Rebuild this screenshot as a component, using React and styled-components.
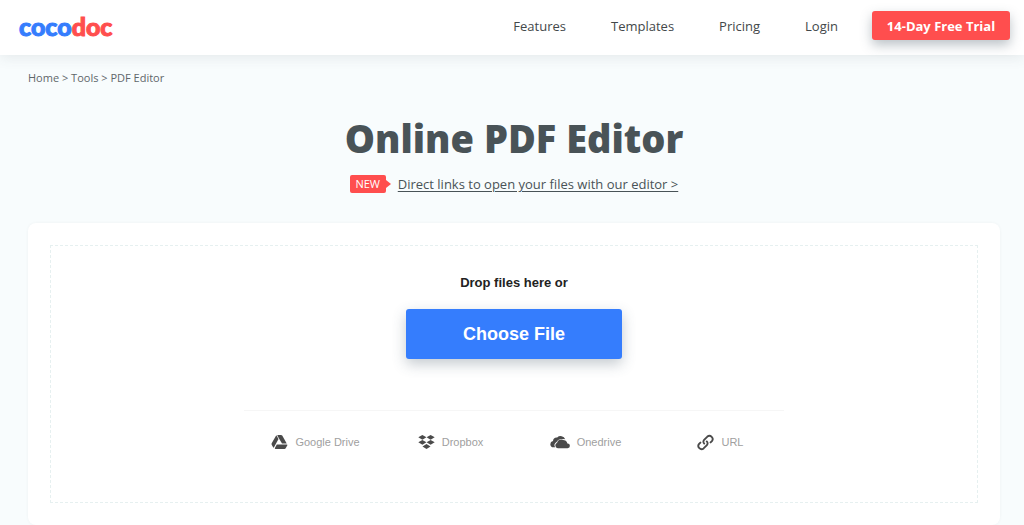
import React, { useRef } from 'react';
import styled, { createGlobalStyle } from 'styled-components';

const GlobalStyles = createGlobalStyle`
  * {
    box-sizing: border-box;
  }

  body {
    margin: 0;
    background: #f8fcfd;
    color: #495357;
    font-family: 'Open Sans', 'Noto Sans', sans-serif;
  }
`;

const Header = styled.header`
  position: relative;
  display: flex;
  align-items: center;
  justify-content: space-between;
  height: 55px;
  padding: 0 14px 4px 19px;
  background: #fff;
  box-shadow: 0 3px 12px rgba(73, 83, 87, 0.1);
`;

const Logo = styled.a`
  color: #357dfd;
  font-family: Lato, sans-serif;
  font-size: 25px;
  font-weight: 900;
  line-height: 32px;
  text-decoration: none;
  -webkit-text-stroke: 1px currentColor;

  span {
    color: #ff4e4e;
  }
`;

const Nav = styled.nav`
  display: flex;
  align-items: center;
  gap: 45px;
`;

const NavLink = styled.a`
  color: #43484a;
  font-size: 13px;
  line-height: 20px;
  text-decoration: none;
`;

const TrialButton = styled.button`
  width: 138px;
  height: 29px;
  margin-left: -11px;
  padding: 0;
  border: 0;
  border-radius: 3px;
  background: #ff4e4e;
  box-shadow: 0 5px 12px rgba(60, 80, 95, 0.35);
  color: #fff;
  font-family: inherit;
  font-size: 13px;
  font-weight: 700;
  cursor: pointer;
`;

const Page = styled.main`
  padding: 15px 24px 0 28px;
`;

const Breadcrumb = styled.nav`
  color: #5f676a;
  font-size: 11px;
  line-height: 16px;

  a {
    color: inherit;
    text-decoration: none;
  }
`;

const Title = styled.h1`
  margin: 24px 0 0;
  color: #495357;
  font-size: 38px;
  font-weight: 800;
  line-height: 56px;
  text-align: center;
`;

const Notice = styled.div`
  display: flex;
  align-items: center;
  justify-content: center;
  gap: 12px;
  margin-top: 8px;
`;

const NewTag = styled.span`
  position: relative;
  width: 36px;
  border-radius: 2px;
  background: #ff4e4e;
  color: #fff;
  font-size: 11px;
  line-height: 18px;
  text-align: center;

  &:after {
    content: '';
    position: absolute;
    top: 5px;
    left: 100%;
    border: 4px solid transparent;
    border-left: 5px solid #ff4e4e;
    border-right: 0;
  }
`;

const NoticeLink = styled.a`
  color: #495357;
  font-size: 13px;
  line-height: 20px;
  text-underline-offset: 2px;
`;

const UploadCard = styled.section`
  margin-top: 29px;
  padding: 22px;
  border-radius: 8px;
  background: #fff;
  box-shadow: 0 0 3px rgba(73, 83, 87, 0.06);
`;

const DropZone = styled.div`
  display: flex;
  flex-direction: column;
  align-items: center;
  min-height: 258px;
  padding: 27px 16px 0;
  border: 1px dashed #e6f0f0;
  font-family: 'Liberation Sans', Arial, sans-serif;
`;

const DropLabel = styled.label`
  color: #222;
  font-size: 13px;
  font-weight: 700;
  line-height: 20px;
`;

const ChooseButton = styled.button`
  width: 216px;
  height: 50px;
  margin-top: 16px;
  border: 0;
  border-radius: 3px;
  background: #357dfd;
  box-shadow: 0 5px 14px rgba(60, 80, 95, 0.3);
  color: #fff;
  font-family: inherit;
  font-size: 18px;
  font-weight: 700;
  cursor: pointer;
`;

const Sources = styled.div`
  display: grid;
  grid-template-columns: repeat(4, 1fr);
  width: 100%;
  max-width: 540px;
  margin-top: 51px;
  padding-top: 21px;
  border-top: 1px solid #f6f6f6;
`;

const SourceButton = styled.button`
  display: flex;
  align-items: center;
  justify-content: center;
  gap: 7px;
  height: 20px;
  padding: 0 0 0 8px;
  border: 0;
  background: none;
  color: #a0a0a0;
  font-family: inherit;
  font-size: 11px;
  white-space: nowrap;
  cursor: pointer;

  svg {
    flex: none;
    fill: #4a4a4a;
  }
`;

const DriveIcon = () => (
  <svg width="17" height="16" viewBox="0 0 17 16">
    <path d="M5.3 1.2 L7.5 5.1 L3 13.3 Q2.6 14 2.1 13.3 L0.7 10.8 Q0.3 10 0.7 9.3 Z" />
    <path d="M6.2 1.4 Q6.5 0.9 7.1 0.9 H10 Q10.8 0.9 11.2 1.6 L15.7 9.5 H11 Z" />
    <path d="M5.8 10.5 H16.2 Q16.5 10.9 16.2 11.5 L14.7 14.2 Q14.3 14.9 13.5 14.9 H4.3 Q3.5 14.9 3.9 14.1 Z" />
  </svg>
);

const DropboxIcon = () => (
  <svg width="17" height="16" viewBox="0 0 17 16">
    <path d="M4.4 0.9 L8.4 3.3 L4.4 5.7 L0.3 3.3 Z" />
    <path d="M12.6 0.9 L16.7 3.3 L12.6 5.7 L8.6 3.3 Z" />
    <path d="M4.4 5.9 L8.4 8.3 L4.4 10.7 L0.3 8.3 Z" />
    <path d="M12.6 5.9 L16.7 8.3 L12.6 10.7 L8.6 8.3 Z" />
    <path d="M8.5 10.1 L12.5 12.5 L8.5 14.9 L4.5 12.5 Z" />
  </svg>
);

const OnedriveIcon = () => (
  <svg width="20" height="14" viewBox="0 0 20 14">
    <path d="M5.2 12.3 H3.5 A3.2 3.2 0 0 1 0.3 9.2 A3.3 3.3 0 0 1 3 6 A3.9 3.9 0 0 1 7.2 2.4 A4.9 4.9 0 0 1 15.2 4.2 A5 5 0 0 0 11.6 4.5 A4.4 4.4 0 0 0 6.6 7 A3.4 3.4 0 0 0 5.2 12.3 Z" />
    <path d="M7.8 13.2 A2.8 2.8 0 0 1 7.1 7.8 A3.9 3.9 0 0 1 11.9 5.1 A4.4 4.4 0 0 1 17.4 8.4 A2.4 2.4 0 0 1 17.6 13.2 Z" />
  </svg>
);

const UrlIcon = () => (
  <svg width="17" height="17" viewBox="0 0 17 17">
    <g fill="none" stroke="#4a4a4a" strokeWidth="1.9" strokeLinecap="round">
      <path d="M7.2 9.6 A2.6 2.6 0 0 1 7.1 5.9 L10.4 2.6 A3.2 3.2 0 0 1 14.9 7.1 L13.6 8.4" />
      <path d="M9.8 7.4 A2.6 2.6 0 0 1 9.9 11.1 L6.6 14.4 A3.2 3.2 0 0 1 2.1 9.9 L3.4 8.6" />
    </g>
  </svg>
);

const links = ['Features', 'Templates', 'Pricing', 'Login'];

const sources = [
  { name: 'Google Drive', Icon: DriveIcon },
  { name: 'Dropbox', Icon: DropboxIcon },
  { name: 'Onedrive', Icon: OnedriveIcon },
  { name: 'URL', Icon: UrlIcon },
];

const App = () => {
  const fileInput = useRef(null);

  return (
    <>
      <GlobalStyles />
      <Header>
        <Logo href="#">coco<span>doc</span></Logo>
        <Nav>
          {links.map((link) => (
            <NavLink key={link} href="#">{link}</NavLink>
          ))}
          <TrialButton type="button">14-Day Free Trial</TrialButton>
        </Nav>
      </Header>

      <Page>
        <Breadcrumb>
          <a href="#">Home</a> &gt; <a href="#">Tools</a> &gt; PDF Editor
        </Breadcrumb>
        <Title>Online PDF Editor</Title>
        <Notice>
          <NewTag>NEW</NewTag>
          <NoticeLink href="#">Direct links to open your files with our editor &gt;</NoticeLink>
        </Notice>

        <UploadCard>
          <DropZone>
            <DropLabel htmlFor="file">Drop files here or</DropLabel>
            <input id="file" type="file" ref={fileInput} hidden />
            <ChooseButton type="button" onClick={() => fileInput.current.click()}>
              Choose File
            </ChooseButton>
            <Sources>
              {sources.map(({ name, Icon }) => (
                <SourceButton key={name} type="button">
                  <Icon />
                  {name}
                </SourceButton>
              ))}
            </Sources>
          </DropZone>
        </UploadCard>
      </Page>
    </>
  );
};

export default App;
